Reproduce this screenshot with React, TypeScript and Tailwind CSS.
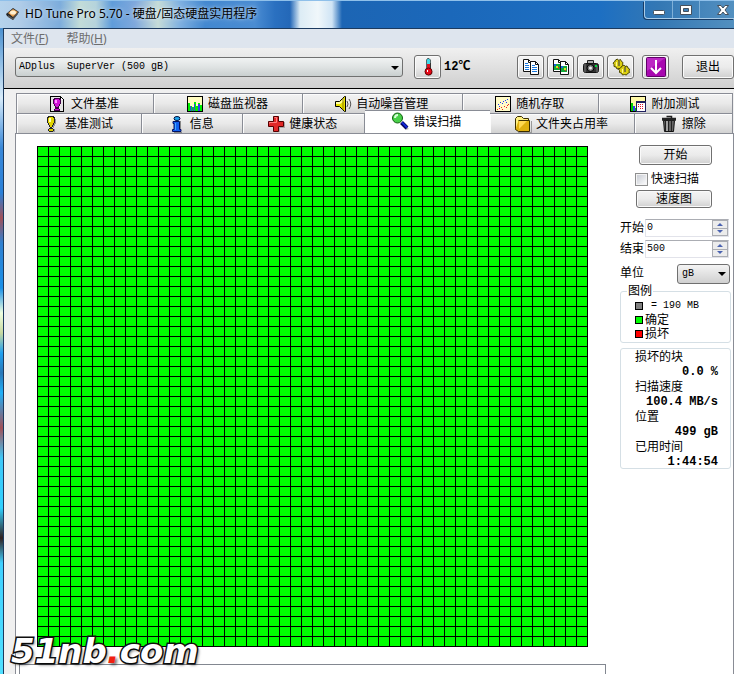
import { ReactNode, useState } from "react";
import clsx from "clsx";

const BLOCKS = 50 * 50;

const svgProps = {
  width: 18,
  height: 18,
  viewBox: "0 0 18 18",
  "aria-hidden": true,
  className: "shrink-0",
};

const FileBenchIcon = () => (
  <svg {...svgProps} shapeRendering="crispEdges">
    <path d="M1 1h11v1h1v1h1v1h1v13H1z" fill="#000" />
    <path d="M2 2h9v3h3v11H2z" fill="#e4e4e4" />
    <path d="M12 3h1v1h1v1h-2z" fill="#fff" />
    <path d="M5 3h6v1h1v5h-1v2h-1v2H6v-2H5V9H4V4h1z" fill="#400048" />
    <path d="M6 4h4v1h1v4h-1v2H9v1H7v-1H6V9H5V5h1z" fill="#d010d8" />
    <path d="M6 5h2v3H6z" fill="#ff90ff" />
    <path d="M6 13h4v1h1v2H5v-2h1z" fill="#400048" />
    <path d="M6 14h4v1H6z" fill="#d010d8" />
  </svg>
);

const DiskMonitorIcon = () => (
  <svg {...svgProps} shapeRendering="crispEdges">
    <rect x="1" y="1" width="16" height="16" fill="#000" />
    <rect x="2" y="2" width="14" height="14" fill="#fffcc0" />
    <path d="M2 8h2v3h2v1h2V7h2v4h2V8h2v2h2v6H2z" fill="#00f000" />
    <path d="M4 11h1v5H4zM6 12h1v4H6zM8 9h1v7H8zM12 9h2v7h-2z" fill="#3040f0" />
  </svg>
);

const SpeakerIcon = () => (
  <svg {...svgProps}>
    <path d="M1.5 6.5h4l5-5h1v15h-1l-5-5h-4z" fill="#e8e000" stroke="#000" />
    <path d="M2 7h4l4-4v3l-4 3H2z" fill="#ffffa0" />
    <path d="M9 3v12" stroke="#8a7a00" />
    <path d="M13 6q2 3 0 6M15 4q3.500 5 0 10" fill="none" stroke="#555" />
  </svg>
);

const RandomIcon = () => (
  <svg {...svgProps} shapeRendering="crispEdges">
    <rect x="1" y="1" width="16" height="16" fill="#000" />
    <rect x="2" y="2" width="14" height="14" fill="#fffbc8" />
    <path d="M4 9h1v1H4zM6 7h1v1H6zM8 8h1v1H8zM9 6h1v1H9zM11 5h1v1h-1zM13 4h1v1h-1zM12 7h1v1h-1zM5 11h1v1H5z" fill="#2030ff" />
    <path d="M3 14h1v1H3zM5 13h1v1H5zM7 12h1v1H7zM8 14h1v1H8zM10 11h1v1h-1zM12 12h1v1h-1zM14 9h1v1h-1zM13 10h1v1h-1z" fill="#f02020" />
  </svg>
);

const ExtraIcon = () => (
  <svg {...svgProps} shapeRendering="crispEdges">
    <rect x="1" y="1" width="16" height="16" fill="#000" />
    <rect x="2" y="2" width="14" height="14" fill="#fff9a8" />
    <path d="M2 8h2v8H2z" fill="#00d000" />
    <path d="M4 11h2v5H4z" fill="#3040f0" />
    <path d="M6 13h2v3H6z" fill="#00d000" />
    <rect x="7" y="6" width="10" height="11" fill="#202060" />
    <rect x="8" y="8" width="8" height="8" fill="#fff" />
    <path d="M9 9h1v1H9zM11 9h1v1h-1zM13 9h1v1h-1zM9 11h1v1H9zM11 11h1v1h-1zM13 11h1v1h-1zM11 13h1v1h-1zM13 13h1v1h-1z" fill="#e01030" />
  </svg>
);

const BenchIcon = () => (
  <svg {...svgProps} shapeRendering="crispEdges">
    <path d="M12 4h1v5h-1v2h-1v2h-1v-3zM11 14h1v3H7v-1h4z" fill="#999" />
    <path d="M5 1h6v1h1v6h-1v2h-1v2h-1v1H7v-1H6v-2H5V8H4V2h1z" fill="#222" />
    <path d="M6 2h4v1h1v5h-1v2H9v2H7v-2H6V8H5V3h1z" fill="#e0d400" />
    <path d="M6 3h2v4H6z" fill="#ffffb0" />
    <path d="M6 13h4v1h1v2h-1v1H6v-1H5v-2h1z" fill="#222" />
    <path d="M6 14h4v2H6z" fill="#d8cc00" />
  </svg>
);

const InfoIcon = () => (
  <svg {...svgProps}>
    <path d="M6 17h8v1H6zM12 6h1v9h-1z" fill="#888" />
    <ellipse cx="9" cy="3.500" rx="3" ry="2" fill="#20a8f0" stroke="#001040" />
    <path d="M5 6.500h6.500v8h1.500v2H4.500v-2h1.500v-6H5z" fill="#1060f0" stroke="#001060" />
    <path d="M7 8h1v7H7z" fill="#40a8ff" />
  </svg>
);

const HealthIcon = () => (
  <svg {...svgProps}>
    <path d="M7 17h6v-4h5V7h-1v5h-5v4H7z" fill="#aaa" />
    <path d="M6.500 1.500h5v5h5v5h-5v5h-5v-5h-5v-5h5z" fill="#e02828" stroke="#500" />
    <path d="M7.500 2.500h2v5h-7v1" fill="none" stroke="#ff8080" />
  </svg>
);

const ScanIcon = () => (
  <svg {...svgProps}>
    <path d="M10 12l5 6 3-1-6-6z" fill="#bbb" />
    <path d="M10.500 10.500l5.500 5.500" stroke="#00005a" strokeWidth="4" />
    <path d="M11 10.500l5 5" stroke="#1028d8" strokeWidth="2" />
    <circle cx="6.500" cy="6" r="5" fill="#48d048" stroke="#106010" />
    <path d="M4 6q0-3 3-3" fill="none" stroke="#d8ffd8" strokeWidth="2" />
  </svg>
);

const FolderIcon = () => (
  <svg {...svgProps}>
    <path d="M4 17h13V6h1v12H4z" fill="#999" />
    <path d="M1.500 14.500v-11l2-2h4l2 2h5v11z" fill="#fff080" stroke="#3a2c00" />
    <path d="M4.500 5.500h11v11h-11l-3-2" fill="#e0b010" stroke="#3a2c00" />
    <path d="M5 6h8l-8 8z" fill="#ffd850" />
  </svg>
);

const TrashIcon = () => (
  <svg {...svgProps}>
    <path d="M3.500 5.500h11l-1 11h-9z" fill="#666" stroke="#111" />
    <path d="M5.500 6v10M8.500 6v10M11.500 6v10" stroke="#222" />
    <path d="M7 6v10" stroke="#ddd" />
    <path d="M2 3.500h14M6.500 1.500h5v2M2 5h14" fill="none" stroke="#222" strokeWidth="1.500" />
  </svg>
);

const ThermometerIcon = () => (
  <svg {...svgProps}>
    <path d="M12 3v9l2 3-3 3H7l5-2z" fill="#aaa" />
    <path d="M7.500 2l1-1.500h1.500L11.500 2v9h-4z" fill="#40d8e8" stroke="#333" strokeWidth=".7" />
    <path d="M8 6h3v6H8z" fill="#e01020" />
    <path d="M11 5h1v6h-1z" fill="#333" />
    <circle cx="9.500" cy="13.500" r="3.500" fill="#e80818" stroke="#600" />
    <path d="M8 12h1v2H8z" fill="#fff" />
  </svg>
);

const Pages = ({ children }: { children: ReactNode }) => (
  <svg {...svgProps}>
    <path d="M1.500 1.500h5l3 3v9h-8z" fill="#fff" stroke="#111" />
    <path d="M6.500 1.500v3h3" fill="none" stroke="#111" />
    <path d="M8.500 3.500h5l3 3v10h-8z" fill="#fff" stroke="#111" />
    <path d="M13.500 3.500v3h3" fill="none" stroke="#111" />
    {children}
  </svg>
);

const CopyTextIcon = () => (
  <Pages>
    <path d="M3 5.500h3M3 7.500h4M3 9.500h4M3 11.500h4M10 7.500h3M10 9.500h5M10 11.500h5M10 13.500h5" stroke="#1878e0" />
  </Pages>
);

const CopyImageIcon = () => (
  <Pages>
    <path d="M2 6h6v6H2zM9 8h6v6H9z" fill="#10a838" />
    <path d="M2 6h2v2H2zM9 8h2v2H9z" fill="#1860e0" />
    <path d="M4 8h2v2H4zM12 10h2v2h-2z" fill="#d8e020" />
    <path d="M6 9h1v2H6zM13 12h1v1h-1z" fill="#e02020" />
  </Pages>
);

const CameraIcon = () => (
  <svg {...svgProps}>
    <path d="M5.500 5V2.500h6V5" fill="#aaa" stroke="#222" />
    <rect x="1.500" y="5.500" width="15" height="9" rx="2" fill="#333" stroke="#111" />
    <path d="M3 6v8M15 8v6" stroke="#777" />
    <circle cx="8.500" cy="10" r="3.500" fill="#777" stroke="#000" />
    <circle cx="8.500" cy="10" r="1.500" fill="#eee" />
    <path d="M13 7h2v2h-2z" fill="#00e040" />
  </svg>
);

const GearsIcon = () => (
  <svg {...svgProps}>
    <g stroke="#4c4600" fill="#dcd010">
      <path d="M3.500 2l2-1 1 1.500 2-1 1 2 1.500 1-.5 2 1 2-2 1-.5 1.500-2-.5-2 .5-1-2-2-.5v-2l-1-1.500 1.500-1z" />
      <path d="M10 8l2-1 1 1.500 2-.5 1 2 1.500 1-.5 2 .5 1.500-2 1-1 1.500-2-.5-2 .5-1-2-2-.5v-2l-1-1.500 2-1z" />
    </g>
    <path d="M7 3v5M13 9v5" stroke="#66623a" strokeWidth="1.500" />
    <path d="M4.500 4v4M10.500 11v4" stroke="#fff690" />
  </svg>
);

const DownloadIcon = () => (
  <svg width="20" height="20" viewBox="0 0 20 20" aria-hidden="true" className="shrink-0">
    <rect x=".5" y=".5" width="19" height="19" rx="1" fill="#a808b0" stroke="#600068" />
    <path d="M1 1h18L1 14z" fill="#d048d8" opacity=".5" />
    <path d="M10 3v13M5 11l5 5 5-5" fill="none" stroke="#fff" strokeWidth="2" />
  </svg>
);

const Logo = () => (
  <svg width="16" height="16" viewBox="0 0 16 16" aria-hidden="true" className="shrink-0">
    <path d="M1 8l7-6 6 4-6 8-6-4z" fill="#222" />
    <path d="M3 7l5-4 5 3-5 5z" fill="#e8a050" />
    <ellipse cx="8" cy="6.500" rx="3" ry="2" fill="#fff0d0" />
    <path d="M3 9l5 3 5-6v2l-5 6-5-3z" fill="#555" />
  </svg>
);

const Arrow = ({ up, className }: { up?: boolean; className?: string }) => (
  <svg width="8" height="4" viewBox="0 0 8 4" className={className} aria-hidden="true">
    <path d={up ? "M0 4l4-4 4 4z" : "M0 0h8L4 4z"} fill="currentColor" />
  </svg>
);

type ButtonProps = { children: ReactNode; label?: string; className?: string };

const Button = ({ children, label, className }: ButtonProps) => (
  <button
    aria-label={label}
    className={clsx(
      "flex items-center justify-center rounded-[3px] border border-[#707070] bg-linear-to-b from-[#f4f4f4] via-[#ebebeb] via-50% to-[#d0d0d0] shadow-[inset_0_0_0_1px_#fafafa]",
      className
    )}
  >
    {children}
  </button>
);

type TabType = { name: string; icon: ReactNode; grow: string };

const topTabs: TabType[] = [
  { name: "文件基准", icon: <FileBenchIcon />, grow: "grow-[137]" },
  { name: "磁盘监视器", icon: <DiskMonitorIcon />, grow: "grow-[149]" },
  { name: "自动噪音管理", icon: <SpeakerIcon />, grow: "grow-[160]" },
  { name: "随机存取", icon: <RandomIcon />, grow: "grow-[136]" },
  { name: "附加测试", icon: <ExtraIcon />, grow: "grow-[134]" },
];

const bottomTabs: TabType[] = [
  { name: "基准测试", icon: <BenchIcon />, grow: "grow-[125]" },
  { name: "信息", icon: <InfoIcon />, grow: "grow-[100]" },
  { name: "健康状态", icon: <HealthIcon />, grow: "grow-[122]" },
  { name: "错误扫描", icon: <ScanIcon />, grow: "grow-[126]" },
  { name: "文件夹占用率", icon: <FolderIcon />, grow: "grow-[146]" },
  { name: "擦除", icon: <TrashIcon />, grow: "grow-[97]" },
];

const TabRow = ({ tabs, active }: { tabs: TabType[]; active?: string }) => (
  <div className="flex h-5 items-end">
    {tabs.map((tab) => {
      const selected = tab.name === active;
      return (
        <button
          key={tab.name}
          role="tab"
          aria-selected={selected}
          className={clsx(
            "flex basis-0 items-center justify-center gap-1 border-[#898c95] pr-[2px]",
            tab.grow,
            selected
              ? "z-10 h-[23px] border-t bg-white pb-[2px]"
              : "h-5 border-t border-r bg-linear-to-b from-[#f3f3f3] via-[#e9e9e9] via-50% to-[#d2d2d2] shadow-[inset_1px_1px_0_#fcfcfc]"
          )}
        >
          {tab.icon}
          <span className="pt-px">{tab.name}</span>
        </button>
      );
    })}
  </div>
);

const NumberField = ({ id, label, initial }: { id: string; label: string; initial: number }) => {
  const [value, setValue] = useState(initial);

  return (
    <div className="flex h-[18px] items-center">
      <label htmlFor={id} className="w-[25px] shrink-0">
        {label}
      </label>
      <div className="flex h-full w-[84px] border border-[#e2e3ea] border-t-[#abadb3]">
        <input
          id={id}
          value={value}
          onChange={(e) => setValue(Number(e.target.value) || 0)}
          className="w-0 min-w-0 grow pl-px font-['Liberation_Mono',monospace] text-[10px] outline-none"
        />
        <div className="flex w-4 flex-col gap-px border border-[#abadb3] bg-[#abadb3] text-[#4a62b0]">
          <button
            aria-label={`${label} +`}
            onClick={() => setValue(value + 1)}
            className="flex flex-1 items-center justify-center bg-[#ececec]"
          >
            <Arrow up className="h-[3px] w-[6px]" />
          </button>
          <button
            aria-label={`${label} -`}
            onClick={() => setValue(value - 1)}
            className="flex flex-1 items-center justify-center bg-[#ececec]"
          >
            <Arrow className="h-[3px] w-[6px]" />
          </button>
        </div>
      </div>
    </div>
  );
};

const Stat = ({ label, value }: { label: string; value: string }) => (
  <div>
    <dt className="h-4">{label}</dt>
    <dd className="h-[14px] text-right font-['Liberation_Mono',monospace] text-[12px] leading-[14px] font-bold">
      {value}
    </dd>
  </div>
);

const Sidebar = () => (
  <aside className="flex w-[111px] shrink-0 flex-col pt-[11px]">
    <Button className="ml-[19px] h-5 w-[73px]">开始</Button>
    <label className="mt-[6px] ml-[15px] flex h-4 items-center gap-[3px]">
      <input
        type="checkbox"
        className="size-[13px] appearance-none border border-[#8e8f8f] bg-linear-to-br from-[#c4c8d0] to-white shadow-[inset_0_0_0_1px_#f4f4f4] checked:bg-[#4a62b0]"
      />
      快速扫描
    </label>
    <Button className="mt-[3px] ml-4 h-[18px] w-[76px]">速度图</Button>
    <div className="mt-[11px] flex flex-col gap-[3px]">
      <NumberField id="start" label="开始" initial={0} />
      <NumberField id="end" label="结束" initial={500} />
    </div>
    <div className="mt-[6px] flex h-5 items-center justify-between">
      <label htmlFor="unit" className="pb-[2px]">
        单位
      </label>
      <div className="relative mr-px">
        <select
          id="unit"
          className="block h-5 w-[53px] appearance-none rounded-[3px] border border-[#707070] bg-linear-to-b from-[#f4f4f4] to-[#d0d0d0] pl-1 font-['Liberation_Mono',monospace] text-[10px]"
        >
          <option>gB</option>
          <option>mB</option>
        </select>
        <Arrow className="pointer-events-none absolute top-2 right-1" />
      </div>
    </div>
    <fieldset className="-mt-px h-[60px] rounded-[3px] border border-[#d5dfe5] pl-[14px]">
      <legend className="-ml-2 h-4 px-px leading-4">图例</legend>
      <ul className="leading-[14px]">
        <li className="flex h-[14px] items-center gap-[2px]">
          <span className="size-2 border border-black bg-[#808080]" />
          <span className="pl-[6px] font-['Liberation_Mono',monospace] text-[10px]">= 190 MB</span>
        </li>
        <li className="flex h-[14px] items-center gap-[2px]">
          <span className="size-2 border border-black bg-[#00ff00]" />
          确定
        </li>
        <li className="flex h-[14px] items-center gap-[2px]">
          <span className="size-2 border border-black bg-[#ff0000]" />
          损坏
        </li>
      </ul>
    </fieldset>
    <dl className="mt-[5px] flex h-[121px] flex-col justify-between rounded-[3px] border border-[#d5dfe5] pr-3 pl-[14px] leading-4">
      <Stat label="损坏的块" value="0.0 %" />
      <Stat label="扫描速度" value="100.4 MB/s" />
      <Stat label="位置" value="499 gB" />
      <Stat label="已用时间" value="1:44:54" />
    </dl>
  </aside>
);

const TitleBar = () => (
  <header className="flex h-7 items-start border-t border-[#8fc0ea] bg-[linear-gradient(90deg,#b5d3ec_0,#b0cce8_20px,#7daddc_60px,#c2dcd8_80px,#b5d3dc_96px,#5f9cda_112px,#7fa8dc_135px,#c6dcd8_158px,#7fb0e0_180px,#4388d0_205px,#4a8cd2_255px,#2a70c0_275px,#2468b8_290px,#dcecf5_300px,#f0f7fa_318px,#cfe4f5_332px,#1c65b4_342px,#1b68ba_450px,#1d6fc2_600px,#3478b4_660px,#5390c0_100%)]">
    <div className="flex h-[26px] grow items-center gap-1 pl-[5px]">
      <Logo />
      <h1 className="font-['Noto_Sans','Noto_Sans_CJK_SC',sans-serif] text-[12px] text-black [text-shadow:0_0_6px_#fff8,0_0_3px_#fff8]">
        HD Tune Pro 5.70 - 硬盘/固态硬盘实用程序
      </h1>
    </div>
    <div className="flex h-[18px] w-[90px] rounded-bl-[4px] border-b border-l border-[#a8cbe8] shadow-[-1px_1px_0_#173c66]">
      <button aria-label="最小化" className="flex w-7 items-center justify-center border-r border-[#7fb0d8]">
        <svg width="12" height="12" viewBox="0 0 12 12">
          <rect x=".5" y="6.500" width="11" height="4" rx="1" fill="#fff" stroke="#46505c" />
        </svg>
      </button>
      <button aria-label="最大化" className="flex w-[27px] items-center justify-center border-r border-[#7fb0d8]">
        <svg width="12" height="12" viewBox="0 0 12 12">
          <path d="M.5 1.500h11v9H.5zM3.500 4.500v3h5v-3z" fill="#fff" fillRule="evenodd" stroke="#46505c" />
        </svg>
      </button>
      <button aria-label="关闭" className="flex grow items-center justify-center pl-3">
        <svg width="12" height="12" viewBox="0 0 12 12">
          <path d="M.5 1.500h3.500L6 4l2-2.500h3.500L8 6l3.500 4.500H8L6 8l-2 2.500H.5L4 6z" fill="#fff" stroke="#46505c" />
        </svg>
      </button>
    </div>
  </header>
);

const Toolbar = () => (
  <div className="flex h-[41px] items-center border-b border-black bg-linear-to-b from-[#f0f0f0] to-[#cfcfcf] pb-[2px] pl-[11px]">
    <div className="relative grow">
      <select
        aria-label="硬盘"
        className="block h-5 w-full appearance-none rounded-[3px] border border-[#707070] bg-linear-to-b from-[#f1f3f3] via-[#dfe3e3] via-50% to-[#c9cfcf] pl-[3px] font-['Liberation_Mono',monospace] text-[10px] text-black"
      >
        <option>{"ADplus\u00a0\u00a0SuperVer (500 gB)"}</option>
      </select>
      <Arrow className="pointer-events-none absolute top-[9px] right-1" />
    </div>
    <Button label="温度" className="ml-[11px] h-6 w-[27px]">
      <ThermometerIcon />
    </Button>
    <output className="w-[76px] pl-[3px] font-['Liberation_Mono','Noto_Sans_CJK_SC',monospace] font-bold">
      12℃
    </output>
    <div className="flex gap-[3px]">
      <Button label="复制文本" className="h-6 w-[27px]">
        <CopyTextIcon />
      </Button>
      <Button label="复制图像" className="h-6 w-[27px]">
        <CopyImageIcon />
      </Button>
      <Button label="截图" className="h-6 w-[27px]">
        <CameraIcon />
      </Button>
      <Button label="选项" className="h-6 w-[27px]">
        <GearsIcon />
      </Button>
    </div>
    <Button label="保存" className="ml-2 h-6 w-[27px]">
      <DownloadIcon />
    </Button>
    <Button className="ml-[13px] h-6 w-[52px]">退出</Button>
  </div>
);

const App = () => {
  return (
    <div className="relative flex min-h-screen flex-col overflow-hidden bg-[#f0f0f0] font-['Liberation_Sans','Noto_Sans_CJK_SC',sans-serif] text-[12px] leading-4 text-black">
      <TitleBar />
      <div className="flex grow bg-[linear-gradient(#4a90d0_0,#d8ecfa_70px,#3a88d8_120px,#2a80d8_165px,#a05058_190px,#3080d0_215px,#1a90e8_260px,#f0ffe0_285px,#c8d8a0_305px,#20a0f0_325px,#2a78b8_345px,#20b0f8_365px,#a05058_400px,#40c8f8_430px,#30d0ff_480px,#302020_510px,#40d0ff_535px,#50e0ff_100%)] pl-[3px]">
        <main className="flex min-w-0 grow flex-col border-t border-l border-[#1c3a5e] bg-[#f0f0f0]">
          <nav className="flex h-[19px] items-center gap-[18px] bg-[#dee5ee] pl-[7px] font-['Noto_Sans','Noto_Sans_CJK_SC',sans-serif] text-[#6d6d6d]">
            <button>
              文件(<u>F</u>)
            </button>
            <button>
              帮助(<u>H</u>)
            </button>
          </nav>
          <Toolbar />

          <div role="tablist" className="mt-1 ml-3 border-l border-[#898c95] pr-px">
            <TabRow tabs={topTabs} />
            <TabRow tabs={bottomTabs} active="错误扫描" />
          </div>
          <section className="ml-[11px] flex grow border border-b-0 border-[#898c95] bg-white">
            <div className="ml-[3px] flex w-[587px] shrink-0 flex-col pt-3">
              <div className="ml-[18px] grid w-[551px] grid-cols-[repeat(50,10px)] gap-px bg-black p-px">
                {Array.from({ length: BLOCKS }, (_, i) => (
                  <div key={i} className="h-[9px] bg-[#00ff00]" />
                ))}
              </div>
              <div className="mt-[17px] min-h-[10px] grow border border-b-0 border-[#828790]" />
            </div>
            <div className="w-[14px] shrink-0" />
            <Sidebar />
          </section>
        </main>
      </div>

      <p className="absolute bottom-[3px] left-[11px] z-20 font-['DejaVu_Sans',sans-serif] text-[34px] leading-10 font-bold text-white italic [paint-order:stroke_fill] [-webkit-text-stroke:3px_#111] [text-shadow:2px_2px_3px_#0008]">
        51nb<span className="text-[#f02010] [-webkit-text-stroke:0]">.</span>com
      </p>
    </div>
  );
};

export default App;
